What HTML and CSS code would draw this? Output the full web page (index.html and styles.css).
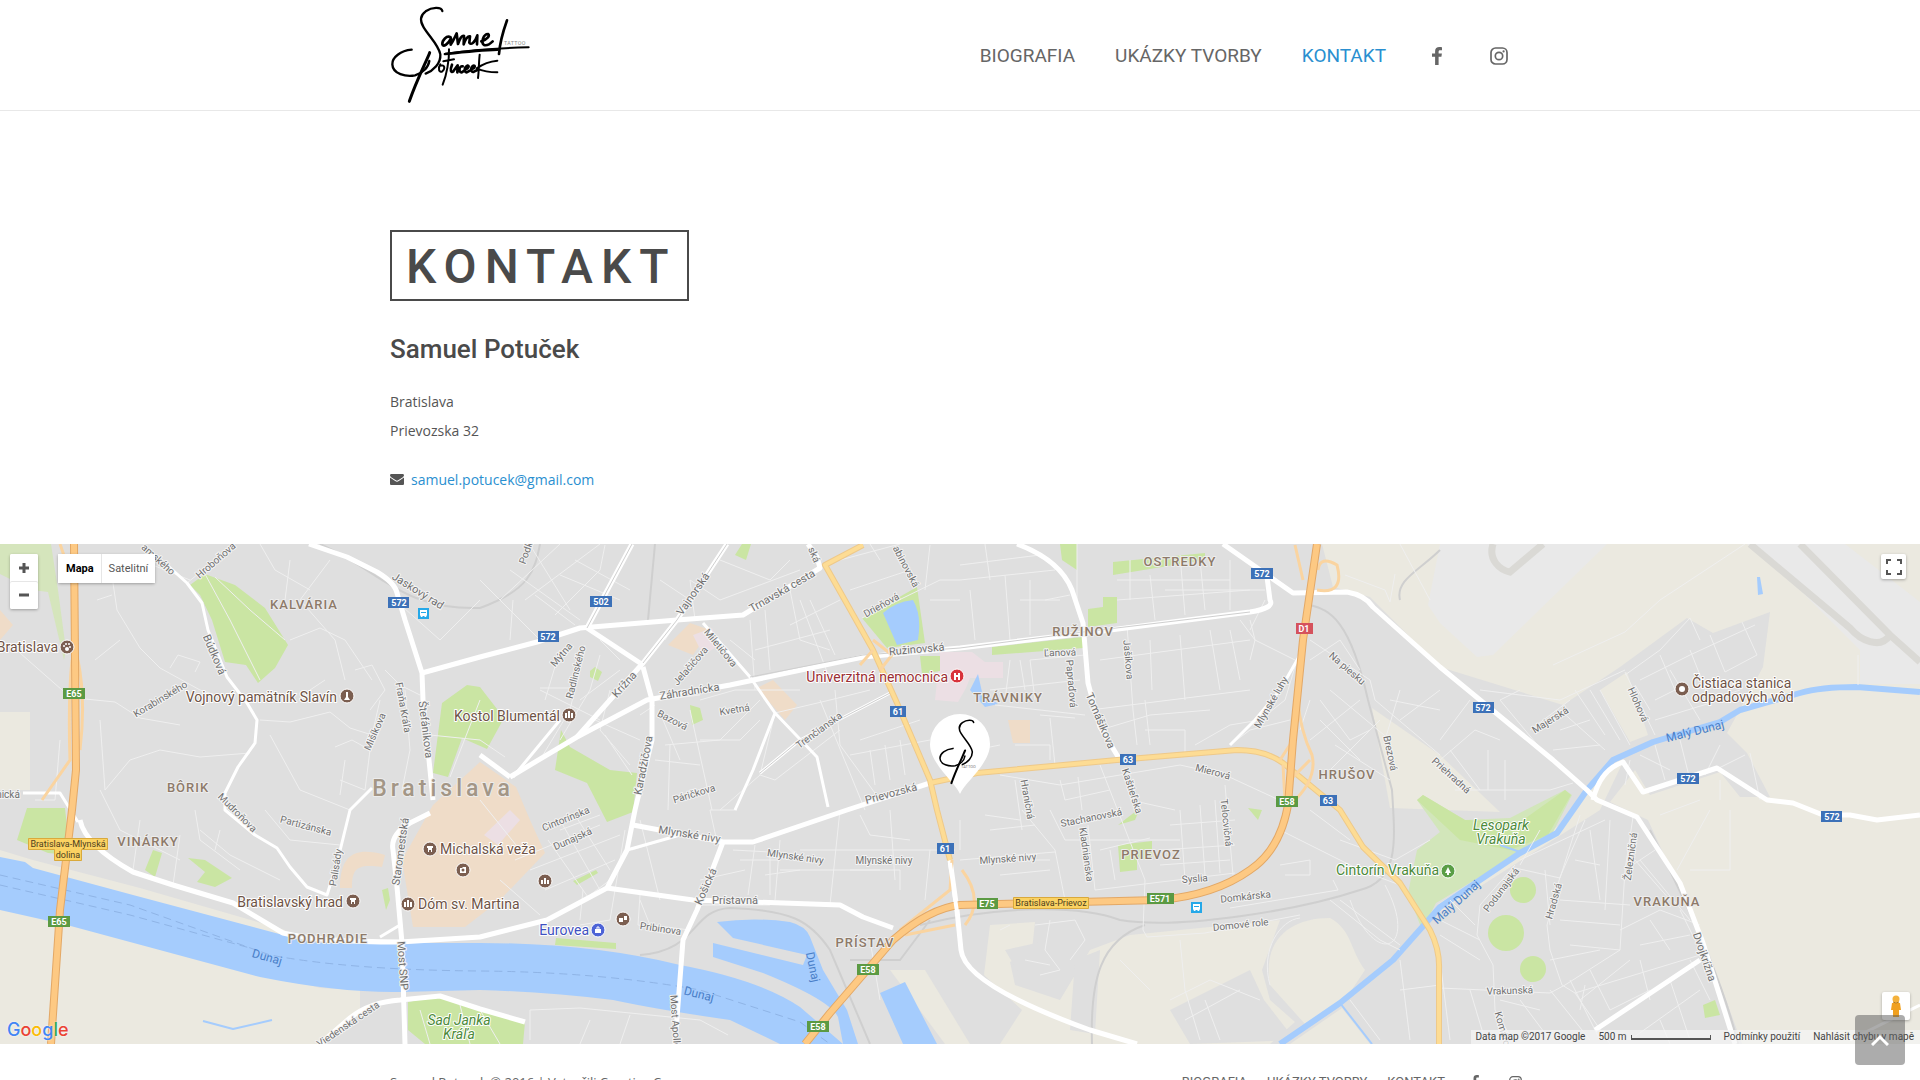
FILE: index.html
```html
<!DOCTYPE html>
<html lang="sk">
<head>
<meta charset="utf-8">
<meta name="viewport" content="width=device-width, initial-scale=1">
<title>Kontakt – Samuel Potuček</title>
<link rel="stylesheet" href="styles.css">
</head>
<body>
<svg class="defs" aria-hidden="true">
  <symbol id="monogram" viewBox="30 0 420 330">
    <path d="M187 33C184 20 156 21 137 34 118 48 120 64 131 82 148 110 176 135 181 163 183 190 160 212 137 221"/>
    <path d="M95 149C62 152 36 172 37 193 38 222 78 231 105 226 128 220 145 202 148 183"/>
    <path d="M149 158C141 180 110 240 88 304" class="thick"/>
  </symbol>
  <symbol id="facebook" viewBox="0 0 10 18"><path fill="currentColor" d="M10 .2v3H8.200C6.900 3.200 6.600 3.800 6.600 4.700v1.800H9.900L9.400 9.700H6.600V18H3.100V9.700H0V6.500h3.100V4.100C3.100 1.400 4.800 0 7.300 0 8.500 0 9.600.1 10 .2z"/></symbol>
  <symbol id="instagram" viewBox="0 0 18 18"><rect x="1" y="1" width="16" height="16" rx="4.500" fill="none" stroke="currentColor" stroke-width="1.700"/><circle cx="9" cy="9" r="3.700" fill="none" stroke="currentColor" stroke-width="1.700"/><circle cx="13.600" cy="4.400" r="1.100" fill="currentColor"/></symbol>
</svg>

<header class="site-header">
  <div class="container header-row">
    <a class="logo" href="#" aria-label="Samuel Potucek Tattoo">
      <svg viewBox="30 0 420 330" width="140" height="110">
        <use href="#monogram" x="30" y="0" width="420" height="330" stroke-width="7"/>
        <g class="ink">
          <path class="bold" d="M212 112C200 104 186 122 187 133 189 144 206 130 213 115L212 134C220 124 224 112 230 100L234 132C239 118 245 104 252 108L251 133C256 118 263 108 270 109L268 128C272 136 284 130 292 106L291 133"/>
          <path class="bold" d="M304 124C320 120 332 106 324 102 310 102 302 128 312 135 322 138 332 130 338 124"/>
          <path d="M381 61C370 92 360 120 357 162" class="bold"/>
          <path d="M194 162C260 152 330 145 446 142"/><path d="M196 162C250 156 310 150 352 149" class="bold"/>
          <path d="M181 193C172 205 178 220 187 214 197 205 193 193 183 197M207 148C208 180 200 225 188 254M190 184L222 178" />
          <path class="bold" d="M216 194C209 212 213 219 220 214L233 196 232 217M248 199C238 196 234 217 245 217L253 212M256 209C268 203 268 196 262 197 252 202 252 217 260 217L271 211M275 208C287 203 286 195 280 197 271 202 271 219 282 215L292 210"/>
          <path d="M299 164C296 190 297 215 294 234M352 182C330 184 307 193 290 205 310 214 330 217 352 217"/>
        </g>
        <text x="372" y="136" class="logo-word">TATTOO</text>
      </svg>
    </a>
    <nav class="main-nav" aria-label="Hlavné menu">
      <a href="#">BIOGRAFIA</a>
      <a href="#">UKÁZKY TVORBY</a>
      <a href="#" class="active">KONTAKT</a>
      <a href="#" class="social" aria-label="Facebook"><svg width="10" height="18"><use href="#facebook"/></svg></a>
      <a href="#" class="social" aria-label="Instagram"><svg width="18" height="18"><use href="#instagram"/></svg></a>
    </nav>
  </div>
</header>

<main>
  <section class="container contact">
    <h1>KONTAKT</h1>
    <h2>Samuel Potuček</h2>
    <address>
      <p>Bratislava<br>Prievozska 32</p>
      <p class="mail">
        <svg width="14" height="11" viewBox="0 0 14 11" aria-hidden="true"><path fill="#555" d="M0 1.300C0 .6.600 0 1.300 0h11.400C13.400 0 14 .6 14 1.300c0 .8-.6 1.500-1.200 1.900L8.200 6.300C7.500 6.800 6.500 6.800 5.800 6.300L1.200 3.200C.6 2.800 0 2 0 1.300zM0 3.600 5.200 7.100c1.100.8 2.500.8 3.600 0L14 3.600v6.100c0 .7-.6 1.300-1.300 1.300H1.300C.6 11 0 10.400 0 9.700z"/></svg>
        <a href="mailto:samuel.potucek@gmail.com">samuel.potucek@gmail.com</a>
      </p>
    </address>
  </section>

  <section class="map" aria-label="Mapa">
    <svg class="map-canvas" viewBox="0 544 1920 500" preserveAspectRatio="xMidYMid slice">
      <rect y="544" width="1920" height="500" fill="#dfdfdf"/>
      <!-- open land -->
      <g fill="#ebe9e0">
        <path d="M1322 544H1920V1044H1742L1708 950 1648 820 1610 802 1635 770 1650 795 1720 772 1740 797H1770L1747 753 1727 733 1763 667 1770 612 1713 633 1687 618 1620 667 1563 705 1440 667 1370 597 1333 587Z"/>
        <path d="M0 905 170 946 320 988 360 990V1010L318 1044H0Z"/>
        <path d="M0 850 33 860 140 888 285 930 283 937 130 897 0 862Z"/>
        <path d="M990 925 1035 922 1032 950 1010 962 1015 985 1060 1000 1090 950 1130 935 1280 920 1262 970 1270 1000 1295 1022 1270 1044H1000L1022 1010 984 975Z"/>
        <path d="M1270 985C1262 940 1290 918 1330 918 1352 930 1350 950 1365 970L1345 1000 1305 1024Z"/>
        <path d="M1600 690 1627 672 1648 735 1630 742Z"/><path d="M1372 708 1440 755 1500 812 1390 808Z"/>
        <path d="M1600 810 1440 912 1438 904 1560 825 1612 765 1622 764Z"/>
        <path d="M1290 1044 1342 1008 1370 1044Z"/><path d="M890 970H925L970 1044H945Z"/><path d="M0 712H30V790H0Z"/>
      </g>
      <path fill="#dfdfdf" d="M1170 1010 1250 970 1264 1000 1295 1040 1190 1044ZM1075 960 1100 950 1095 1034 1070 1030ZM1005 950 1050 940 1060 975 1020 975Z"/>
      <!-- airport -->
      <path fill="#e9e9e9" d="M1440 544H1607L1493 655 1477 657 1440 623 1428 605ZM1747 544H1845L1920 602V684H1860V650L1800 590Z"/>
      <path fill="none" stroke="#dad9d5" stroke-width="7" d="M1493 544C1488 560 1500 570 1510 572L1543 544M1800 544 1890 635 1920 662M1890 635C1880 650 1860 640 1850 628L1750 544"/>
      <!-- built-up accents -->
      <g fill="#efdcc8">
        <path d="M433 805 480 762 516 787 530 820 545 853 500 900 465 927 413 927 402 860Z"/>
        <path d="M668 645 690 623 710 630 693 655ZM757 688 773 680 797 705 785 720ZM1008 720H1030V743H1013ZM0 610 13 625 0 640Z"/>
        <path d="M340 888C340 850 360 848 385 855L382 867C355 863 352 870 352 888Z"/>
      </g>
      <g fill="#ecdfe4"><path d="M940 652H972L985 662H1003V678H970L966 688 958 702 935 700ZM484 835 510 810 520 820 498 845ZM693 635 712 628 720 645 703 655Z"/></g>
      <!-- parks -->
      <g fill="#cae5a3">
        <path fill="#d5e5bc" d="M0 544H51L58 590 66 650 64 660 48 592 32 590 0 574Z"/>
        <path d="M190 585 205 574 235 585 265 608 288 645 275 668 258 683 246 665 225 662 212 620 200 595Z"/>
        <path d="M442 703 467 685 480 687 504 718 487 749 462 738 448 777 433 773ZM561 730 570 747 610 770 637 773 633 812 607 822 587 783 555 770Z"/>
        <path d="M862 618 917 587 925 643 887 648ZM1113 562 1205 553V560L1113 575ZM1060 544H1077V570L1062 560ZM1088 609 1103 607V597H1117V623L1088 627ZM992 647 1083 637V648L992 655ZM920 656H940V671L922 674ZM1118 845 1152 841V858L1137 860 1137 870 1120 872Z"/>
        <path fill="#d2e6ba" d="M1408 893 1417 850 1440 832 1417 800 1423 795 1465 820 1510 818 1565 790 1572 795 1550 838 1520 853 1436 903 1422 930Z"/>
        <path d="M1417 800 1423 795 1465 820 1520 822 1565 790 1571 795 1548 835 1510 850 1460 840Z"/>
        <circle cx="1523" cy="890" r="13"/><circle cx="1506" cy="933" r="18"/><circle cx="1533" cy="969" r="13"/>
        <path d="M1703 1005 1715 1000 1720 1015 1705 1018ZM408 1002 440 996 480 1007 525 1022 523 1044H425L408 1030ZM17 840 27 808H65L70 855 48 853ZM145 870 153 850 162 853 155 877ZM188 858 205 860 232 878 215 887 197 882 205 872ZM573 881 596 870 598 873 577 885ZM556 938 616 943V949L555 945ZM590 671 595 667 602 672 598 681 590 677ZM690 705 700 708 703 720 692 725ZM735 555 742 544H751L746 560ZM382 890 388 888 390 900 386 910ZM1248 808 1262 810 1258 820ZM1118 825 1140 808 1135 820Z"/>
      </g>
      <!-- water -->
      <g fill="#a5ccfd">
        <path d="M0 857 25 862 33 868 133 895 283 935Q305 943 327 943H480Q590 943 680 965 760 980 800 1007L843 1044H780L730 1020Q660 1010 613 1000 547 992 480 990L400 992Q340 993 260 977L67 925 0 910Z"/>
        <path d="M717 922Q755 917 790 922 806 926 810 937L823 970 847 1010 858 1044H843L838 1017Q830 1000 763 973L713 957V943L803 965 807 955 733 938Z"/>
        <path d="M880 993 905 982 937 1044H903ZM883 613Q895 602 913 600 922 615 918 640L897 645ZM970 690 978 674 982 692 998 704 985 707ZM1757 577H1760L1763 594 1758 595Z"/>
      </g>
      <path class="river" d="M1920 692 1857 687Q1820 687 1800 693L1740 710 1720 722 1653 742 1613 760 1587 790 1557 833 1520 853 1440 907 1393 960 1340 1003 1280 1044"/>
      <path class="river thin" d="M1340 1003 1372 1044M203 1021 233 1029 272 1020M1500 845 1520 852"/>
      <path fill="none" stroke="#8fb4e6" stroke-dasharray="8 5" d="M0 875 130 905 270 955Q350 970 480 971 600 972 700 990L800 1022 830 1044M0 885 130 915 250 948"/>
      <!-- rail -->
      <path fill="none" stroke="#cfcfcf" stroke-width="2" d="M320 544C380 570 400 610 480 608 530 590 535 570 540 544M655 544 648 620M920 925C1000 905 1080 905 1120 920 1180 930 1300 910 1360 890 1400 880 1395 840 1392 790L1368 700C1350 620 1330 610 1310 605M1092 1044C1090 980 1100 940 1145 925M1400 600C1395 580 1420 570 1440 550M640 955C700 950 690 910 730 908 790 910 810 920 830 950L870 1044M930 920 900 960 850 960M1738 1044C1725 990 1700 930 1650 830"/>
      <!-- local streets -->
      <g class="local">
        <path d="M113 583 117 610 140 648 160 668 200 690 232 700M20 653 62 690 75 698 115 702 140 718 180 725M187 583 235 544M120 640 95 660M97 600 112 595M140 560 190 580M260 544 275 570 310 590M330 560 300 600 335 640 345 680M290 640 320 628 345 640 372 680M205 574 230 620 260 680M215 577 250 610 285 640M170 668 178 655 200 662 195 672M100 720 105 790 130 760 160 750 200 757 250 753M260 720 290 722 330 712 350 728 372 735 380 700M335 747 352 740 370 750 365 790 340 780M395 600 440 640 480 600M385 670 400 685 420 695M340 795 345 760M270 735 300 790 350 810M100 790 120 830 180 860M200 830 230 855 280 880M195 810 200 840 240 870M265 810 290 840 340 845M290 560 285 600M310 690 325 680M355 670 372 665 385 690 370 710M405 690 410 750 402 790M430 735 480 740 505 757M450 777 480 700M60 740 55 800 35 800M140 820 133 870M180 835 173 885M220 830 215 850"/>
        <path d="M480 580 540 640M500 600 560 544M510 570 580 620M525 600 600 544M513 600 510 640M535 595 575 625M540 688H572M560 650 545 700M585 645 570 710 540 760M600 640 620 660M555 615 600 570 605 545M560 575 620 600M575 560 630 590M530 545 570 610M540 690 600 720M600 655 590 690 560 740M620 670 580 700M610 690 600 730 630 765M595 720 640 740M655 705 640 715M660 700 700 695M605 735 632 775M663 720 680 760M665 745 720 740 760 700M690 710 712 810M700 700 735 690 800 690M695 620 690 580 720 600 800 570M750 620 755 690M765 610 770 670M790 590 800 640 830 650M810 600 835 655M755 650 830 630M840 600 790 625M800 600 830 680M730 640 755 660M665 640 690 600M660 580 690 600M720 560 770 580 790 560M775 713 760 775 720 810M775 713 830 700 870 690M700 740 740 740 760 720M655 760 700 765M670 745 668 810M820 700 865 810M835 690 840 745 880 800M860 740 920 720M850 755 930 740M885 745 890 780M900 740 905 775M870 750 875 785M840 560 900 544M862 618 940 580 960 580M850 590 910 570M880 560 870 544M930 600 960 600M925 590 930 545M760 775 775 780 840 730"/>
        <path d="M960 580 1055 570M970 590 975 640M1005 575 1010 640M985 544 990 580M1030 580V635M960 565 1040 555M1077 544V600M1045 600 1070 595M1020 600H1060M1117 600 1250 590M1130 560V600M1150 575 1155 620M1180 555 1185 615M1200 560 1205 610M1230 560V610M1117 580H1230M1165 590H1265M1100 660 1250 640M1127 625 1133 710 1137 745M1090 710 1250 690M1150 640 1152 690M1180 635 1185 700M1210 630 1220 690M1240 620 1255 640 1250 660M1250 620 1255 640 1295 660M1265 600 1250 630M1230 630 1240 680M1310 700 1300 730M990 690 1080 680M995 705 1085 715M1050 718 1055 765M1085 655 1030 660 1035 700M1020 660 1025 690M1145 730H1185V755M1145 700 1150 745M1040 715 1075 718M1100 730 1150 715 1210 710M1195 745 1230 725 1260 720 1285 700 1300 650M1230 745 1250 730 1290 720M1015 745H1050V760M975 750 1000 745M1010 660 1005 700M1310 640 1370 680 1375 700 1440 755M1310 660 1340 640 1360 670M1320 700 1350 740 1370 730M1330 690 1390 740M1310 740 1360 700M1360 760 1320 720M1335 745 1390 780M1330 770 1380 720M1400 690 1385 740M1440 690 1400 720M1440 710 1390 700M1345 590 1370 600"/>
        <path d="M1015 780 1022 830M1078 777 1082 810M1000 775 1060 785 1180 765 1225 775 1290 805M1100 765 1145 880 1143 930 1147 937 1205 933 1300 915M1225 785 1233 875M1050 810 1065 840 1180 840M1022 810 1055 850 1065 900M1088 825 1095 890 1235 873M985 815 1020 820M990 830 1035 825M1060 780 1065 800 1110 790M1180 810 1185 880M1200 805 1205 875M1215 800 1220 873M1170 825 1235 820M1160 850 1235 845M1160 865 1230 860M1130 800 1175 810M1100 850 1150 838M1110 850 1115 880M990 860H1050M1000 875 1050 870M960 860 1055 852M1280 830 1360 870 1400 885M1350 840 1310 810M1340 840 1395 860 1430 840M1280 865 1310 860V875H1285M1333 880 1338 890 1230 908M1340 900 1400 945M1330 900 1380 940 1400 950M1385 885C1420 950 1375 970 1350 900M1270 985C1260 950 1280 920 1300 918M1180 940 1185 990 1200 1040M1120 960 1150 990M1185 1020 1240 990M1205 1000 1220 1040M1170 1000 1210 980 1260 1000M1400 990 1440 985M1350 1000 1380 1040M1400 960 1410 1040M1050 920 1045 950 1060 970 1040 975M1025 960 1050 965M1035 925 1075 920 1085 940 1070 960M1000 930 1010 925"/>
        <path d="M737 810 710 810 717 842M560 830 600 815M515 860 600 825M530 870 620 835M545 890 615 860M560 820 600 890M575 815 610 870M548 840 590 900M500 880 540 915M590 895 610 880M520 850 480 800M632 850 680 835M640 820 660 900M640 900 650 925 690 930M625 830 610 920 580 925M580 920 583 890M733 850 770 852V895M755 845 748 895M800 850H955M840 810 830 905M740 860 780 860M765 875 800 870M860 815 870 835 910 840M890 810 895 880M930 850 925 900M780 840 775 900M850 870 900 870 900 890M700 880 745 870M960 820V850M530 1040 530 1010 580 1008 700 1020 728 1035M590 1020 580 1044M630 1015 620 1044M480 1010 500 1044M420 1010 430 1044M460 1005 470 1044M640 895 638 925 680 932M700 905H770M780 870H880M870 940 880 1000"/>
        <path d="M1553 665 1625 632 1660 600 1745 544M1480 690 1560 700 1625 670M1625 672 1655 735M1600 690 1630 745M1625 675 1660 650 1690 618M1640 680 1690 655 1755 625M1635 685 1650 710M1710 635 1725 672 1757 655 1742 622M1690 650 1710 700 1740 690M1660 655 1675 690 1655 700M1670 670 1700 720M1655 720 1720 700M1690 618 1700 640M1560 710 1605 750M1570 700 1530 730M1553 750 1600 745M1560 730 1590 720M1590 690 1620 740M1575 690 1605 735M1550 760 1500 700 1520 690M1455 790H1550L1573 783M1440 760 1475 730 1500 740M1450 750 1480 790M1488 750V790M1505 760V800M1440 740 1470 700M1655 745 1665 780M1630 760 1625 785M1640 755 1670 770M1680 740 1690 780M1720 745 1705 775M1750 753 1760 800M1715 770 1745 755M1440 770 1460 790M1858 655V685M1430 600 1400 544M1345 575 1385 590 1390 602M1395 574 1390 602"/>
        <path d="M1520 860 1605 820M1585 820 1560 877 1547 925 1550 950 1562 985 1575 993 1610 1044M1515 868 1560 878M1560 878 1580 815M1633 817 1625 870 1620 950 1565 985M1590 830 1600 900M1610 820 1605 910M1560 900 1630 905M1560 920 1620 925M1570 945 1620 950M1550 960 1600 950M1520 865 1540 830M1625 870 1655 850M1635 860 1670 900M1640 860 1690 920M1620 930 1660 910 1700 925M1650 920 1670 950M1680 910 1700 950M1640 945 1690 935M1575 993 1700 955M1585 985 1580 1010M1590 970 1610 1010M1640 960 1650 1000M1610 1010 1650 990M1570 980 1600 1040M1630 1040 1700 990M1670 980 1690 1040M1580 1000 1630 960M1690 960 1710 1000M1660 1020 1670 1044M1515 865 1480 905 1477 935 1493 965 1495 1010 1515 1044M1440 988 1550 993M1550 993 1565 985M1440 920 1480 940M1440 935 1480 960M1450 900 1475 925M1500 1000 1540 1010M1520 1000 1550 1040M1440 960 1450 1040M1470 990 1485 1040M1550 990 1590 1040M1575 860 1600 865M1545 870 1550 925M1660 815 1700 800M1720 780V800M1690 870H1730V810M1677 870 1710 810"/>
      </g>
      <!-- main streets -->
      <g class="street">
        <path d="M309 544 347 557 377 572Q395 583 397 593L405 620 422 673 423 700 433 800M430 813 410 823Q390 835 393 850L397 887 402 943 405 1044M422 673 480 657 537 642 580 628 677 620 743 615 820 568 817 557 808 544"/>
        <path d="M80 820Q85 845 133 872L173 885 233 903 283 933Q320 942 400 942L480 937 547 920 607 888 627 850 635 810 652 740V700L643 667"/>
        <path d="M510 777 577 737 647 700 730 685 863 657 960 648 1087 633 1250 612Q1275 608 1270 600L1267 577M632 544 587 628 640 663M480 755 510 777"/>
        <path d="M727 544 677 620 643 663 577 737M633 825 723 842H753L847 810 930 783M723 842 697 910 683 940 675 1044M607 888 693 900 840 905 863 917 893 928"/>
        <path d="M1017 544Q1060 560 1072 590L1083 623 1088 683 1100 727 1120 760M1223 544 1293 593 1347 592Q1365 595 1373 607L1440 667 1553 760 1587 790 1597 800 1637 817 1680 883 1703 943 1735 1044M1593 800Q1600 770 1623 762L1643 792 1717 768 1767 800 1793 803 1823 815H1850L1877 820 1920 815M1595 1030 1700 960"/>
        <path d="M950 860 957 910 961 950Q965 985 1090 1030L1137 1044M320 1044 350 1018Q370 1002 400 1000L440 996 480 1009 525 1022"/>
      </g>
      <g class="street medium">
        <path d="M167 565 187 583 202 603 208 630 227 677 247 703 257 720 255 743 238 767 225 793V810L255 835 277 848 290 867 307 887 327 895 337 863 350 810 372 788M23 793H60L78 822M0 795 20 793"/>
        <path d="M703 623 750 677 775 713 817 757 828 807M775 713 753 770 735 810M760 773 800 740 890 693M513 777 560 720M627 850 680 835M380 937 400 925M1300 655 1280 690 1255 720 1230 745M1850 1040 1920 1005"/>
      </g>
      <path fill="none" stroke="#cfcfcf" d="M632 544 587 628M727 544 677 620 643 663M750 677 863 655 960 648 1083 632 1250 612M760 773 800 740 890 693"/>
      <!-- highways -->
      <g class="hw-case"><path d="M863 545 825 565 873 650 897 703 930 780 937 810 950 860M930 783 977 773 1117 760 1237 750Q1265 750 1283 763L1340 810 1363 847 1400 883 1430 930Q1440 950 1439 970V1044"/></g>
      <g class="hw"><path d="M863 545 825 565 873 650 897 703 930 780 937 810 950 860M930 783 977 773 1117 760 1237 750Q1265 750 1283 763L1340 810 1363 847 1400 883 1430 930Q1440 950 1439 970V1044"/></g>
      <path fill="none" stroke="#fad4a0" stroke-width="3" d="M60 544 76 590M72 660Q68 700 70 760L42 800M78 660Q86 700 80 750M1295 545 1303 580M1317 590Q1345 595 1337 565 1320 555 1318 570M1293 740 1280 760M1298 700Q1300 730 1312 755 1318 780 1290 805M1283 765 1285 800M900 930 950 890 952 860M905 935 955 925M962 870Q985 900 965 925M873 650 860 665M873 640 892 655 880 670M1290 780 1310 760"/>
      <g class="mw-case"><path d="M74 544 76 770 72 810 60 910 51 1044M1317 544 1303 640 1293 740 1288 805Q1280 850 1250 870 1215 895 1160 900L960 905Q930 908 893 940L830 1013 805 1044"/></g>
      <g class="mw"><path d="M74 544 76 770 72 810 60 910 51 1044M1317 544 1303 640 1293 740 1288 805Q1280 850 1250 870 1215 895 1160 900L960 905Q930 908 893 940L830 1013 805 1044"/></g>
      <path fill="none" stroke="#fff" stroke-width="4" d="M950 863 957 912"/>

      <!-- street names -->
      <g class="street-name">
        <text transform="translate(156 562) rotate(42)">amského</text>
        <text transform="translate(218 563) rotate(-41)">Hroboňova</text>
        <text transform="translate(416 594) rotate(32)" class="major">Jaskový rad</text>
        <text transform="translate(211 656) rotate(67)" class="major">Búdková</text>
        <text transform="translate(162 702) rotate(-31)">Korabinského</text>
        <text transform="translate(378 733) rotate(-66)">Mišíkova</text>
        <text transform="translate(400 708) rotate(80)">Fraňa Kráľa</text>
        <text transform="translate(422 730) rotate(83)" class="major">Štefánikova</text>
        <text transform="translate(235 815) rotate(45)">Mudroňova</text>
        <text transform="translate(305 829) rotate(15)">Partizánska</text>
        <text transform="translate(339 868) rotate(-81)">Palisády</text>
        <text transform="translate(404 852) rotate(-82)" class="major">Staromestská</text>
        <text transform="translate(399 966) rotate(86)" class="major">Most SNP</text>
        <text transform="translate(350 1027) rotate(-34)">Viedenská cesta</text>
        <text transform="translate(8 798)">nická</text>
        <text transform="translate(529 554) rotate(-70)">Podk</text>
        <text transform="translate(696 596) rotate(-55)" class="major">Vajnorská</text>
        <text transform="translate(784 594) rotate(-30)" class="major">Trnavská cesta</text>
        <text transform="translate(811 556) rotate(68)">ská</text>
        <text transform="translate(903 568) rotate(62)">abinovská</text>
        <text transform="translate(883 608) rotate(-29)">Drieňová</text>
        <text transform="translate(564 657) rotate(-50)">Mýtna</text>
        <text transform="translate(579 673) rotate(-76)">Radlinského</text>
        <text transform="translate(627 687) rotate(-48)" class="major">Krížna</text>
        <text transform="translate(718 650) rotate(51)">Miletičova</text>
        <text transform="translate(693 668) rotate(-49)">Jelačičova</text>
        <text transform="translate(690 695) rotate(-9)" class="major">Záhradnícka</text>
        <text transform="translate(671 723) rotate(27)">Bazová</text>
        <text transform="translate(735 713) rotate(-9)">Kvetná</text>
        <text transform="translate(917 653) rotate(-5)" class="major">Ružinovská</text>
        <text transform="translate(821 733) rotate(-36)">Trenčianska</text>
        <text transform="translate(647 766) rotate(-79)" class="major">Karadžičova</text>
        <text transform="translate(695 797) rotate(-17)">Páričkova</text>
        <text transform="translate(892 797) rotate(-15)" class="major">Prievozská</text>
        <text transform="translate(567 822) rotate(-22)">Cintorínska</text>
        <text transform="translate(574 842) rotate(-24)">Dunajská</text>
        <text transform="translate(689 838) rotate(9)" class="major">Mlynské nivy</text>
        <text transform="translate(795 860) rotate(8)">Mlynské nivy</text>
        <text transform="translate(884 864)">Mlynské nivy</text>
        <text transform="translate(1008 862) rotate(-4)">Mlynské nivy</text>
        <text transform="translate(709 888) rotate(-66)" class="major">Košická</text>
        <text transform="translate(735 904)" class="major">Prístavná</text>
        <text transform="translate(660 932) rotate(8)">Pribinova</text>
        <text transform="translate(672 1022) rotate(86)">Most Apollo</text>
        <text transform="translate(1060 656) rotate(-2)">Ľanová</text>
        <text transform="translate(1068 684) rotate(85)">Papraďová</text>
        <text transform="translate(1125 660) rotate(85)">Jašíkova</text>
        <text transform="translate(1097 722) rotate(67)" class="major">Tomášikova</text>
        <text transform="translate(1274 704) rotate(-60)">Mlynské luhy</text>
        <text transform="translate(1345 671) rotate(41)">Na piesku</text>
        <text transform="translate(1387 754) rotate(78)">Brezová</text>
        <text transform="translate(1212 775) rotate(15)">Mierová</text>
        <text transform="translate(1129 792) rotate(72)">Kaštieľska</text>
        <text transform="translate(1024 800) rotate(80)">Hraničná</text>
        <text transform="translate(1092 821) rotate(-11)">Stachanovská</text>
        <text transform="translate(1083 855) rotate(82)">Kladnianska</text>
        <text transform="translate(1223 823) rotate(84)">Telocvičná</text>
        <text transform="translate(1195 882) rotate(-4)">Syslia</text>
        <text transform="translate(1246 900) rotate(-6)">Domkárska</text>
        <text transform="translate(1241 928) rotate(-6)">Domové role</text>
        <text transform="translate(1449 778) rotate(42)">Priehradná</text>
        <text transform="translate(1552 723) rotate(-32)">Majerská</text>
        <text transform="translate(1635 706) rotate(66)">Hlohová</text>
        <text transform="translate(1504 892) rotate(-53)">Podunajská</text>
        <text transform="translate(1557 902) rotate(-74)">Hradská</text>
        <text transform="translate(1634 857) rotate(-82)">Železničná</text>
        <text transform="translate(1510 994) rotate(-2)">Vrakunská</text>
        <text transform="translate(1701 958) rotate(71)" class="major">Dvojkrížna</text>
        <text transform="translate(1500 1032) rotate(74)">Komárov</text>
      </g>
      <g class="water-name">
        <text transform="translate(266 961) rotate(16)">Dunaj</text><text transform="translate(698 998) rotate(14)">Dunaj</text><text transform="translate(809 968) rotate(78)">Dunaj</text>
        <text transform="translate(1696 735) rotate(-14)">Malý Dunaj</text><text transform="translate(1459 905) rotate(-42)">Malý Dunaj</text>
      </g>
      <!-- districts -->
      <g class="district">
        <text x="304" y="609">KALVÁRIA</text><text x="188" y="792">BÔRIK</text><text x="148" y="846">VINÁRKY</text><text x="328" y="943">PODHRADIE</text>
        <text x="1180" y="566">OSTREDKY</text><text x="1083" y="636">RUŽINOV</text><text x="1008" y="702">TRÁVNIKY</text><text x="1347" y="779">HRUŠOV</text>
        <text x="1151" y="859">PRIEVOZ</text><text x="865" y="947">PRÍSTAV</text><text x="1667" y="906">VRAKUŇA</text>
      </g>
      <text class="city" x="443" y="796">Bratislava</text>
      <!-- places -->
      <g class="place">
        <text x="58" y="652" text-anchor="end">Bratislava</text><text x="337" y="702" text-anchor="end">Vojnový pamätník Slavín</text><text x="560" y="721" text-anchor="end">Kostol Blumentál</text>
        <text x="440" y="854">Michalská veža</text><text x="343" y="907" text-anchor="end">Bratislavský hrad</text><text x="418" y="909">Dóm sv. Martina</text>
        <text x="1692" y="688">Čistiaca stanica</text><text x="1692" y="702">odpadových vôd</text>
        <text class="hospital" x="948" y="682" text-anchor="end">Univerzitná nemocnica</text>
        <text class="shop" x="589" y="935" text-anchor="end">Eurovea</text>
        <text class="park" x="1439" y="875" text-anchor="end">Cintorín Vrakuňa</text>
        <text class="park it" x="1501" y="830" text-anchor="middle">Lesopark</text><text class="park it" x="1501" y="844" text-anchor="middle">Vrakuňa</text>
        <text class="park it" x="459" y="1025" text-anchor="middle">Sad Janka</text><text class="park it" x="459" y="1039" text-anchor="middle">Kráľa</text>
      </g>
      <g class="pin-dot">
        <circle cx="67" cy="647" r="7"/><circle cx="347" cy="696" r="7"/><circle cx="569" cy="715" r="7"/><circle cx="430" cy="849" r="7"/><circle cx="463" cy="870" r="7"/><circle cx="353" cy="901" r="7"/><circle cx="408" cy="904" r="7"/><circle cx="545" cy="881" r="7"/><circle cx="623" cy="919" r="7"/><circle cx="1682" cy="689" r="7"/>
        <circle cx="957" cy="676" r="7" fill="#d8323b"/><circle cx="598" cy="930" r="7" fill="#4d63d6"/><circle cx="1448" cy="871" r="7" fill="#5a9e46"/>
      </g>
      <g fill="#fff">
        <path d="M346 692H348V697L350 700H344L346 697ZM565 713H567V718H565ZM568 711H570V718H568ZM571 713H573V718H571ZM427 846H433V848H432V852H431V850H429V852H428V848H427ZM350 898H356V900H355V904H354V902H352V904H351V900H350ZM404 902H406V907H404ZM407 900H409V907H407ZM410 902H412V907H410ZM541 880H543V884H541ZM544 878H546V884H544ZM547 880H549V884H547ZM460 868H462L463 867H466V873H460ZM619 918H623V922H619ZM624 916H627V920H624ZM1448 867 1451 873H1449V875H1447V873H1445Z"/>
        <circle cx="463" cy="870" r="1.500" fill="#7b5e50"/><circle cx="67" cy="649" r="2"/><circle cx="64" cy="646" r="1"/><circle cx="66" cy="644" r="1"/><circle cx="69" cy="644" r="1"/><circle cx="70" cy="647" r="1"/><circle cx="1682" cy="689" r="3"/>
        <path d="M954 673H956V675H958V673H960V680H958V677H956V680H954ZM595 929H601V933H595Z"/><path d="M597 929V927H599V929" fill="none" stroke="#fff"/>
      </g>
      <!-- transit stops -->
      <g fill="#25a8e8"><rect x="418" y="608" width="11" height="11"/><rect x="1191" y="902" width="11" height="11"/></g>
      <path fill="#fff" d="M420 610H427V615L426 617H425L424 616H423L422 617H421L420 615ZM1193 904H1200V909L1199 911H1198L1197 910H1196L1195 911H1194L1193 909Z"/><path stroke="#25a8e8" d="M421 612.500H426M1194 906.500H1199"/>
      <!-- road shields -->
      <g fill="#3c71b8"><rect x="388" y="597" width="21" height="11"/><rect x="590" y="596" width="22" height="11"/><rect x="538" y="631" width="21" height="11"/><rect x="890" y="706" width="16" height="11"/><rect x="937" y="843" width="17" height="11"/><rect x="1251" y="568" width="22" height="11"/><rect x="1120" y="754" width="16" height="11"/><rect x="1320" y="795" width="17" height="11"/><rect x="1473" y="702" width="21" height="11"/><rect x="1677" y="773" width="22" height="11"/><rect x="1821" y="811" width="21" height="11"/></g>
      <g fill="#5b9a43"><rect x="63" y="688" width="22" height="11"/><rect x="48" y="916" width="22" height="11"/><rect x="1276" y="796" width="22" height="11"/><rect x="977" y="898" width="21" height="11"/><rect x="1147" y="893" width="27" height="11"/><rect x="857" y="964" width="22" height="11"/><rect x="807" y="1021" width="22" height="11"/></g>
      <rect x="1296" y="623" width="17" height="11" fill="#d5525c"/>
      <path fill="#fbd262" stroke="#d9a93c" d="M28.500 838.500H107.500V849.500H81.500V860.500H54.500V849.500H28.500ZM1013.500 897.500H1088.500V908.500H1013.500Z"/>
      <g class="shield">
        <text x="399" y="606">572</text><text x="601" y="605">502</text><text x="548" y="640">572</text><text x="898" y="715">61</text><text x="945" y="852">61</text><text x="1262" y="577">572</text><text x="1128" y="763">63</text><text x="1328" y="804">63</text><text x="1483" y="711">572</text><text x="1688" y="782">572</text><text x="1832" y="820">572</text>
        <text x="74" y="697">E65</text><text x="59" y="925">E65</text><text x="1287" y="805">E58</text><text x="987" y="907">E75</text><text x="1160" y="902">E571</text><text x="868" y="973">E58</text><text x="818" y="1030">E58</text><text x="1304" y="632">D1</text>
      </g>
      <g class="exit"><text x="68" y="847">Bratislava-Mlynská</text><text x="68" y="858">dolina</text><text x="1051" y="906">Bratislava-Prievoz</text></g>
      <!-- studio marker -->
      <path fill="#fff" d="M960 794C955 782 930 764 930 744A30 30 0 0 1 990 744C990 764 965 782 960 794Z"/>
      <use href="#monogram" x="938" y="715" width="95" height="74" stroke-width="7"/>
      <text x="961" y="768" class="marker-word">TATTOO</text>
    </svg>

    <div class="zoom-control">
      <button type="button" aria-label="Priblížiť"><svg width="12" height="12"><path d="M6 1V11M1 6H11" stroke="#555" stroke-width="3"/></svg></button>
      <button type="button" aria-label="Oddialiť"><svg width="12" height="12"><path d="M1 6H11" stroke="#555" stroke-width="3"/></svg></button>
    </div>
    <div class="type-control"><button type="button" class="on">Mapa</button><button type="button">Satelitní</button></div>
    <button type="button" class="fullscreen" aria-label="Celá obrazovka"><svg width="16" height="16"><path d="M1 5V1H5M11 1H15V5M15 11V15H11M5 15H1V11" fill="none" stroke="#555" stroke-width="2"/></svg></button>
    <button type="button" class="pegman" aria-label="Street View"><svg width="14" height="22" viewBox="0 0 14 22"><circle cx="7" cy="4" r="3.500" fill="#f4b13c"/><path d="M3 8H11L12 15H10V22H4V15H2Z" fill="#f0a020"/><path d="M4 7Q7 9 10 7" stroke="#b87a16" fill="none"/></svg></button>
    <a class="google" href="#" aria-label="Google"><span class="b">G</span><span class="r">o</span><span class="y">o</span><span class="b">g</span><span class="g">l</span><span class="r">e</span></a>
    <div class="attribution">
      <span>Data map ©2017 Google</span>
      <span class="scale">500 m <i></i></span>
      <a href="#">Podmínky použití</a>
      <a href="#">Nahlásit chybu v mapě</a>
    </div>
  </section>
</main>

<footer class="container site-footer">
  <p>Samuel Potucek © 2016 | Vytvořili Creative Co</p>
  <nav aria-label="Menu v pätičke">
    <a href="#">BIOGRAFIA</a><a href="#">UKÁZKY TVORBY</a><a href="#">KONTAKT</a>
    <a href="#" class="foot-icon" aria-label="Facebook"><svg width="8" height="14"><use href="#facebook"/></svg></a>
    <a href="#" class="foot-icon" aria-label="Instagram"><svg width="13" height="13"><use href="#instagram"/></svg></a>
  </nav>
</footer>

<a class="to-top" href="#" aria-label="Hore"><svg width="18" height="12"><path d="M1 11 9 3 17 11" fill="none" stroke="#fff" stroke-width="3"/></svg></a>
</body>
</html>
```
FILE: styles.css
```css
* { box-sizing: border-box; }
html { scrollbar-width: none; }
body { margin: 0; background: #fff; color: #555; font: 14px/29px "Open Sans", "Noto Sans", sans-serif; }
a { color: inherit; text-decoration: none; }
p { margin: 0; }
svg { display: block; }
button { border: 0; padding: 0; background: #fff; font: inherit; cursor: pointer; }
.defs { position: absolute; width: 0; height: 0; }
.container { max-width: 1140px; margin: 0 auto; }

.site-header { border-bottom: 1px solid #e8e8e8; }
.header-row { display: flex; justify-content: space-between; align-items: center; }
.main-nav { display: flex; align-items: center; padding-top: 2px; font: 19px/30px Roboto, sans-serif; color: #666; }
.main-nav a { padding: 0 20px; }
.main-nav .active { color: #2a8fd0; }
.main-nav .social { width: 62px; padding: 0; display: flex; justify-content: center; }
#monogram path { fill: none; stroke: #000; stroke-linecap: round; }
#monogram .thick { stroke-width: 9; }
.ink path { fill: none; stroke: #000; stroke-width: 6; stroke-linecap: round; stroke-linejoin: round; }
.ink .bold { stroke-width: 8; }
.logo-word { font: 16px Roboto, sans-serif; fill: #888; letter-spacing: 1px; }

.contact { padding: 119px 0 50px; display: flex; flex-direction: column; align-items: flex-start; }
h1, h2 { margin: 0; color: #4a4a4a; font-family: Roboto, sans-serif; font-weight: 500; }
h1 { border: 2px solid #4a4a4a; padding: 2px 10px 0 14px; font-size: 48px; line-height: 65px; letter-spacing: 8px; }
h2 { margin: 31px 0 21px; font-size: 26px; line-height: 34px; }
address { font-style: normal; }
.mail { display: flex; align-items: center; gap: 7px; margin-top: 20px; }
.mail a { color: #2a8fd0; }

.map { position: relative; overflow: hidden; font-family: Roboto, sans-serif; }
.map-canvas { width: 100%; height: 500px; }
.local path { fill: none; stroke: #efefef; stroke-width: 1; }
.street path { fill: none; stroke: #fff; stroke-width: 5; stroke-linejoin: round; }
.medium path { stroke-width: 3; }
.river { fill: none; stroke: #a5ccfd; stroke-width: 6; stroke-linejoin: round; }
.river.thin { stroke-width: 2; }
.hw-case path, .hw path, .mw-case path, .mw path { fill: none; stroke-linejoin: round; }
.hw-case path { stroke: #eec98a; stroke-width: 6; }
.hw path { stroke: #fddc94; stroke-width: 4; }
.mw-case path { stroke: #e3a866; stroke-width: 8; }
.mw path { stroke: #fdc983; stroke-width: 6; }
.map-canvas text { paint-order: stroke; stroke-linejoin: round; }
.street-name text, .water-name text, .district text, .city, .shield text, .exit text { text-anchor: middle; }
.street-name text { font-size: 10px; fill: #707070; stroke: #f4f4f4; stroke-width: 2px; }
.street-name .major { font-size: 11px; }
.water-name text { font-size: 12px; fill: #4a7fc8; }
.district text { font-size: 13px; font-weight: 500; letter-spacing: 1px; fill: #8d7a69; stroke: #ededed; stroke-width: 2px; }
.city { font-size: 23px; font-weight: 500; letter-spacing: 4px; fill: #a39686; stroke: #ececec; stroke-width: 2px; }
.place text { font-size: 14px; fill: #6e5346; stroke: #fff; stroke-width: 2px; }
.place .hospital { fill: #9b2e33; }
.place .shop { fill: #3f51c1; }
.place .park { fill: #4c8a3a; }
.place .it { font-style: italic; }
.pin-dot { fill: #7b5e50; stroke: #fff; }
.shield text { font-size: 9px; font-weight: 700; fill: #fff; }
.exit text { font-size: 9px; fill: #4d4020; }
.marker-word { font-size: 4px; fill: #777; }

.zoom-control, .type-control, .fullscreen, .pegman { position: absolute; background: #fff; border-radius: 2px; box-shadow: 0 1px 3px rgba(0, 0, 0, .3); }
.zoom-control { left: 10px; top: 10px; width: 28px; }
.zoom-control button { display: flex; align-items: center; justify-content: center; width: 28px; height: 27px; border-radius: 2px; }
.zoom-control button + button { box-shadow: inset 0 1px #e6e6e6; height: 28px; }
.type-control { left: 58px; top: 10px; display: flex; font-size: 11px; line-height: 29px; color: #565656; }
.type-control button { padding: 0 7px; color: #565656; }
.type-control .on { padding-left: 8px; color: #000; font-weight: 700; border-right: 1px solid #e6e6e6; }
.fullscreen { right: 14px; top: 10px; width: 25px; height: 25px; display: flex; align-items: center; justify-content: center; }
.pegman { right: 10px; bottom: 24px; width: 28px; height: 28px; display: flex; align-items: center; justify-content: center; }
.google { position: absolute; left: 7px; bottom: 1px; font: 500 18px/26px Inter, sans-serif; text-shadow: 0 0 2px #fff; }
.google .b { color: #4285f4; }
.google .r { color: #ea4335; }
.google .y { color: #fbbc05; }
.google .g { color: #34a853; }
.attribution { position: absolute; right: 0; bottom: 0; display: flex; gap: 13px; padding: 0 6px 0 5px; background: rgba(245, 245, 245, .7); font-size: 10px; line-height: 14px; color: #444; }
.scale { display: flex; gap: 4px; }
.scale i { width: 80px; height: 5px; margin-top: 5px; border: solid #555; border-width: 0 1px 2px; }

.site-footer { display: flex; justify-content: space-between; padding: 28px 0 30px; font-size: 13px; line-height: 20px; color: #666; }
.site-footer nav { display: flex; gap: 10px; font-family: Roboto, sans-serif; }
.site-footer nav a { padding: 0 5px; }
.site-footer .foot-icon { display: flex; align-items: center; justify-content: center; width: 30px; }

.to-top { position: fixed; right: 15px; bottom: 15px; width: 50px; height: 50px; display: flex; align-items: center; justify-content: center; border-radius: 4px; background: rgba(90, 90, 90, .5); }
```
